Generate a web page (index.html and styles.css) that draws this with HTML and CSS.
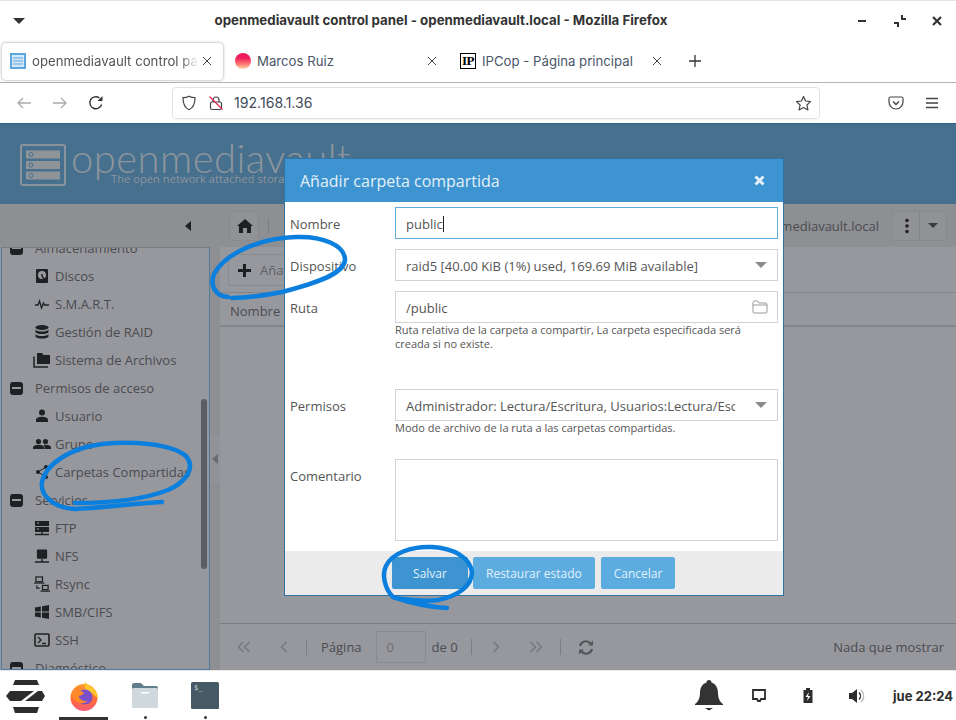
FILE: index.html
```html
<!DOCTYPE html>
<html lang="es">
<head>
<meta charset="utf-8">
<title>openmediavault control panel</title>
<link rel="stylesheet" href="styles.css">
</head>
<body>
<div class="screen">
  <header class="titlebar">
    <svg class="menu-caret" width="14" height="8" viewBox="0 0 14 8"><path d="M1 1h12L7 7z" fill="#333"/></svg>
    <div class="win-title">openmediavault control panel - openmediavault.local - Mozilla Firefox</div>
    <div class="win-controls">
      <svg width="12" height="12" viewBox="0 0 12 12"><path d="M1 6h8" stroke="#333" stroke-width="2" fill="none"/></svg>
      <svg width="14" height="14" viewBox="0 0 14 14"><path d="M9 1v4h4M1 9h4v4" stroke="#333" stroke-width="2" fill="none"/></svg>
      <svg width="12" height="12" viewBox="0 0 12 12"><path d="M2 2l8 8M10 2l-8 8" stroke="#333" stroke-width="2.2" fill="none"/></svg>
    </div>
  </header>

  <nav class="tabs">
    <div class="tab tab-active">
      <svg class="fav" width="16" height="16" viewBox="0 0 16 16"><rect width="16" height="16" fill="#5ba6dc"/><rect x="2" y="2" width="12" height="12" fill="#d4e8f7"/><path d="M3 5h10M3 8h10M3 11h10" stroke="#5ba6dc" stroke-width="1"/></svg>
      <span class="tab-text tab-fade">openmediavault control pa</span>
      <svg class="tab-x" width="10" height="10" viewBox="0 0 10 10"><path d="M1 1l8 8M9 1L1 9" stroke="#444" stroke-width="1" fill="none"/></svg>
    </div>
    <div class="tab">
      <span class="marcos-ico"></span>
      <span class="tab-text">Marcos Ruiz</span>
      <svg class="tab-x" width="10" height="10" viewBox="0 0 10 10"><path d="M1 1l8 8M9 1L1 9" stroke="#444" stroke-width="1" fill="none"/></svg>
    </div>
    <div class="tab">
      <span class="ip-ico">IP</span>
      <span class="tab-text">IPCop - Página principal</span>
      <svg class="tab-x" width="10" height="10" viewBox="0 0 10 10"><path d="M1 1l8 8M9 1L1 9" stroke="#444" stroke-width="1" fill="none"/></svg>
    </div>
    <svg class="tab-plus" width="14" height="14" viewBox="0 0 14 14"><path d="M7 1v12M1 7h12" stroke="#333" stroke-width="1.3" fill="none"/></svg>
  </nav>

  <div class="navbar">
    <svg class="nav-ico nav-back" width="16" height="16" viewBox="0 0 16 16"><path d="M15 8H2M7 3L2 8l5 5" stroke="#aaa" stroke-width="1.3" fill="none"/></svg>
    <svg class="nav-ico nav-fwd" width="16" height="16" viewBox="0 0 16 16"><path d="M1 8h13M9 3l5 5-5 5" stroke="#aaa" stroke-width="1.3" fill="none"/></svg>
    <svg class="nav-ico nav-reload" width="16" height="16" viewBox="0 0 16 16"><path d="M13.6 9.5A6 6 0 1 1 11.5 3" stroke="#333" stroke-width="1.4" fill="none"/><path d="M14.5 1v5h-5z" fill="#333"/></svg>
    <div class="urlbar">
      <svg width="16" height="16" viewBox="0 0 16 16"><path d="M8 1.2c2 1.2 4 1.5 6 1.5 0 6-1.6 10-6 12-4.400-2-6-6-6-12 2 0 4-.3 6-1.500z" stroke="#444" stroke-width="1.200" fill="none"/></svg>
      <svg class="url-lock" width="16" height="16" viewBox="0 0 16 16"><path d="M5 7V5a3 3 0 0 1 6 0v2" stroke="#444" stroke-width="1.200" fill="none"/><rect x="2.500" y="7" width="11" height="7.500" rx="1.500" stroke="#444" stroke-width="1.200" fill="none"/><path d="M1.500 1.500l13 13" stroke="#e22850" stroke-width="1.300"/></svg>
      <span class="url-text">192.168.1.36</span>
      <svg class="url-star" width="17" height="17" viewBox="0 0 17 17"><path d="M8.500 1.500l2.100 4.500 4.900.6-3.600 3.400 1 4.900-4.400-2.500-4.400 2.500 1-4.900L1.500 6.600l4.900-.6z" stroke="#444" stroke-width="1.200" fill="none" stroke-linejoin="round"/></svg>
    </div>
    <svg class="nav-ico nav-pocket" width="16" height="16" viewBox="0 0 16 16"><path d="M2.500 2h11A1.500 1.500 0 0 1 15 3.500V7a7 7 0 0 1-14 0V3.500A1.500 1.500 0 0 1 2.500 2z" stroke="#444" stroke-width="1.200" fill="none"/><path d="M5 6.500l3 3 3-3" stroke="#444" stroke-width="1.400" fill="none"/></svg>
    <svg class="nav-ico nav-menu" width="14" height="12" viewBox="0 0 14 12"><path d="M1 1.500h12M1 6h12M1 10.500h12" stroke="#444" stroke-width="1.300" fill="none"/></svg>
  </div>

  <main class="app">
    <div class="app-header">
      <svg class="logo-mark" width="46" height="42" viewBox="0 0 46 42">
        <rect x="1" y="1" width="44" height="40" rx="2" fill="none" stroke="#8a939c" stroke-width="2"/>
        <rect x="6" y="6.500" width="34" height="8" fill="#8f9499"/><rect x="6" y="17" width="34" height="8" fill="#8f9499"/><rect x="6" y="27.500" width="34" height="8" fill="#8f9499"/>
        <circle cx="11" cy="10.500" r="2" fill="none" stroke="#47708f"/><circle cx="11" cy="21" r="2" fill="none" stroke="#47708f"/><circle cx="11" cy="31.500" r="2" fill="none" stroke="#47708f"/>
      </svg>
      <div class="logo-text">
        <div class="logo-name">openmediavault</div>
        <div class="logo-sub">The open network attached storage</div>
      </div>
    </div>
    <div class="app-toolbar">
      <div class="collapse-slot"><span class="caret-left"></span></div>
      <div class="tool-btn home-btn">
        <svg width="16" height="14" viewBox="0 0 16 14"><path d="M8 0L0 7h2v7h4V9h4v5h4V7h2z" fill="#1e1f22"/></svg>
      </div>
      <span class="tool-sep"></span>
      <div class="tool-spacer"></div>
      <span class="host-name">openmediavault.local</span>
      <div class="split-btn">
        <span class="split-part split-first"><svg width="4" height="16" viewBox="0 0 4 16"><circle cx="2" cy="2.500" r="1.800" fill="#222"/><circle cx="2" cy="8" r="1.800" fill="#222"/><circle cx="2" cy="13.500" r="1.800" fill="#222"/></svg></span>
        <span class="split-part split-last"><span class="caret-down"></span></span>
      </div>
    </div>
    <div class="app-body">
      <aside class="sidebar">
        <ul class="tree">
          <li class="group"><span class="minus"></span>Almacenamiento</li>
          <li class="leaf"><svg viewBox="0 0 14 16"><rect width="12" height="14" x="1" y="1" rx="1" fill="#1f2023"/><circle cx="7" cy="7" r="4" fill="#9a9a9e"/><circle cx="7" cy="7" r="1" fill="#1f2023"/><path d="M7 8l2.500 3.500" stroke="#1f2023" stroke-width="1.400"/></svg>Discos</li>
          <li class="leaf"><svg viewBox="0 0 14 16"><path d="M0 9h3l1.500-4 2 7 2-5 1 2h4.500" stroke="#1f2023" stroke-width="1.300" fill="none"/></svg>S.M.A.R.T.</li>
          <li class="leaf"><svg viewBox="0 0 14 16"><ellipse cx="7" cy="3.500" rx="6.500" ry="2.500" fill="#1f2023"/><path d="M.5 5.500c1 2.700 12 2.700 13 0v2.500c-1 2.700-12 2.700-13 0zM.5 10c1 2.700 12 2.700 13 0v2.500c-1 2.700-12 2.700-13 0z" fill="#1f2023"/></svg>Gestión de RAID</li>
          <li class="leaf"><svg class="wide" viewBox="0 0 18 16"><path d="M4 1h5l1.500 2H17v9H4z" fill="#1f2023"/><path d="M1 4.500V15h14" stroke="#1f2023" stroke-width="1.500" fill="none"/></svg>Sistema de Archivos</li>
          <li class="group"><span class="minus"></span>Permisos de acceso</li>
          <li class="leaf"><svg viewBox="0 0 14 16"><circle cx="7" cy="4.500" r="3" fill="#1f2023"/><path d="M1 14v-2c0-2 3-3.200 6-3.200s6 1.200 6 3.200v2z" fill="#1f2023"/></svg>Usuario</li>
          <li class="leaf"><svg class="wide" viewBox="0 0 18 16"><circle cx="5.500" cy="5.500" r="2.600" fill="#1f2023"/><circle cx="12.500" cy="5.500" r="2.600" fill="#1f2023"/><path d="M0 13v-1.500c0-1.800 2.500-2.700 5.500-2.700s5.500.9 5.500 2.700V13zM11.500 13v-2c0-.8-.5-1.500-1-2 .6-.2 1.300-.2 2-.2 3 0 5.500.9 5.500 2.700V13z" fill="#1f2023"/></svg>Grupo</li>
          <li class="leaf"><svg viewBox="0 0 14 16"><circle cx="11" cy="3" r="2" fill="#1f2023"/><circle cx="3" cy="8" r="2" fill="#1f2023"/><circle cx="11" cy="13" r="2" fill="#1f2023"/><path d="M11 3L3 8l8 5" stroke="#1f2023" fill="none"/></svg>Carpetas Compartidas</li>
          <li class="group"><span class="minus"></span>Servicios</li>
          <li class="leaf"><svg viewBox="0 0 14 16"><rect y="1" width="14" height="5" fill="#1f2023"/><rect y="7" width="14" height="5" fill="#1f2023"/><path d="M2 3h2M2 9h2" stroke="#9a9a9e"/><path d="M7 12v2M0 14.500h14" stroke="#1f2023" stroke-width="1.400"/></svg>FTP</li>
          <li class="leaf"><svg viewBox="0 0 15 16"><rect x="2" y="1" width="11" height="10" rx="1" fill="#1f2023"/><path d="M7.500 11v3M0 14.500h15" stroke="#1f2023" stroke-width="1.500"/></svg>NFS</li>
          <li class="leaf"><svg class="wide" viewBox="0 0 17 17"><rect x="2" y="1" width="7" height="5" fill="none" stroke="#1f2023" stroke-width="1.300"/><path d="M0 7.500h11" stroke="#1f2023" stroke-width="1.300"/><rect x="9" y="10" width="6" height="4.500" fill="none" stroke="#1f2023" stroke-width="1.300"/><path d="M7 16h10M3 10v3h3" stroke="#1f2023" stroke-width="1.300" fill="none"/></svg>Rsync</li>
          <li class="leaf"><svg viewBox="0 0 14 16"><path d="M0 3.500l5.800-1v5H0zM7 2.300L14 1v6.500H7zM0 8.500h5.800v5L0 12.500zM7 8.500h7V15l-7-1.300z" fill="#1f2023"/></svg>SMB/CIFS</li>
          <li class="leaf"><svg class="wide" viewBox="0 0 16 16"><rect x="1" y="2" width="14" height="12" rx="1" fill="none" stroke="#1f2023" stroke-width="1.600"/><path d="M4 5l3 3-3 3M8 11.500h4" stroke="#1f2023" stroke-width="1.400" fill="none"/></svg>SSH</li>
          <li class="group"><span class="minus"></span>Diagnóstico</li>
        </ul>
        <span class="scroll-thumb"></span>
      </aside>
      <div class="split-strip"><span class="strip-handle"><span class="caret-left small"></span></span></div>
      <section class="grid-panel">
        <div class="grid-tools"><div class="add-btn"><svg width="13" height="13" viewBox="0 0 13 13"><path d="M6.500 0v13M0 6.500h13" stroke="#1e1f22" stroke-width="3"/></svg><span>Añadir</span></div></div>
        <div class="grid-head">Nombre</div>
        <div class="grid-empty"></div>
        <div class="pager">
          <svg class="pg-first" width="14" height="12" viewBox="0 0 14 12"><path d="M6.500 1l-5 5 5 5M12.500 1l-5 5 5 5" stroke="#77787c" stroke-width="1.500" fill="none"/></svg>
          <svg class="pg-prev" width="8" height="12" viewBox="0 0 8 12"><path d="M6.500 1l-5 5 5 5" stroke="#77787c" stroke-width="1.500" fill="none"/></svg>
          <span class="pg-sep pg-sep-a"></span>
          <span class="pg-label">Página</span>
          <span class="pg-input">0</span>
          <span class="pg-of">de 0</span>
          <span class="pg-sep pg-sep-b"></span>
          <svg class="pg-next" width="8" height="12" viewBox="0 0 8 12"><path d="M1.500 1l5 5-5 5" stroke="#77787c" stroke-width="1.500" fill="none"/></svg>
          <svg class="pg-last" width="14" height="12" viewBox="0 0 14 12"><path d="M1.500 1l5 5-5 5M7.500 1l5 5-5 5" stroke="#77787c" stroke-width="1.500" fill="none"/></svg>
          <span class="pg-sep pg-sep-c"></span>
          <svg class="pg-refresh" width="16" height="15" viewBox="0 0 16 15"><path d="M2 6a6 6 0 0 1 10.500-2.500M14 9a6 6 0 0 1-10.500 2.500" stroke="#55565a" stroke-width="2.200" fill="none"/><path d="M15 .500v5h-5zM1 14.500v-5h5z" fill="#55565a"/></svg>
          <span class="pg-status">Nada que mostrar</span>
        </div>
      </section>
    </div>

    <div class="modal">
      <div class="modal-head">
        <span>Añadir carpeta compartida</span>
        <svg width="11" height="11" viewBox="0 0 11 11"><path d="M1.500 1.500l8 8M9.500 1.500l-8 8" stroke="#e4f0f9" stroke-width="3"/></svg>
      </div>
      <form class="modal-body">
        <div class="row"><label>Nombre</label><div class="field focus"><span>public</span><i class="cursor"></i></div></div>
        <div class="row"><label>Dispositivo</label><div class="field"><span>raid5 [40.00 KiB (1%) used, 169.69 MiB available]</span><span class="caret-down light"></span></div></div>
        <div class="row row-ruta"><label>Ruta</label><div class="col">
          <div class="field"><span>/public</span><svg class="folder" width="16" height="14" viewBox="0 0 16 14"><path d="M1 12V2.500A1.500 1.500 0 0 1 2.500 1h3L7 3h6.500A1.500 1.500 0 0 1 15 4.500V12a1 1 0 0 1-1 1H2a1 1 0 0 1-1-1zM1 5h14" stroke="#999" fill="none"/></svg></div>
          <p class="help">Ruta relativa de la carpeta a compartir, La carpeta especificada será creada si no existe.</p>
        </div></div>
        <div class="row row-perm"><label>Permisos</label><div class="col">
          <div class="field"><span class="clip">Administrador: Lectura/Escritura, Usuarios:Lectura/Escritura, Otros: Sólo lectura</span><span class="caret-down light"></span></div>
          <p class="help">Modo de archivo de la ruta a las carpetas compartidas.</p>
        </div></div>
        <div class="row"><label>Comentario</label><div class="area"></div></div>
      </form>
      <div class="modal-foot">
        <span class="btn btn-primary">Salvar</span>
        <span class="btn">Restaurar estado</span>
        <span class="btn">Cancelar</span>
      </div>
    </div>
  </main>

  <footer class="dock">
    <svg class="zorin" width="40" height="34" viewBox="0 0 40 34">
      <path d="M9 1H31L33 6H7Z" fill="#2d2d2d"/>
      <path d="M4 12H28L15 22H4L0 17Z" fill="#2d2d2d"/>
      <path d="M32 12H36L39 17L36 22H19Z" fill="#2d2d2d"/>
      <path d="M7 28H33L31 34H9Z" fill="#2d2d2d"/>
    </svg>
    <div class="dock-app dock-active">
      <svg width="30" height="30" viewBox="0 0 30 30">
        <defs><linearGradient id="ffg" x1="0" y1="0" x2="0" y2="1"><stop offset="0" stop-color="#ff9a2b"/><stop offset=".6" stop-color="#ff6a3c"/><stop offset="1" stop-color="#f55a78"/></linearGradient></defs>
        <circle cx="15" cy="16.500" r="13.500" fill="url(#ffg)"/>
        <path d="M16 0c0 3 5 4 8 7 4 4 5 7 5 11-3-4-7-7-11-7-2-3-3-6-2-11z" fill="#ffc62e"/>
        <circle cx="16" cy="16" r="7.500" fill="#7a4fc8"/>
        <path d="M3 11c2-3 6-5 9-4-2 1-3 2-3 3 3 0 6 1 6 2-1 2-3 2-5 3 0 3 4 6 9 5-5 4-12 2-14-2-2-2-3-5-2-7z" fill="#ff8a2b"/>
      </svg>
    </div>
    <div class="dock-app dock-dot">
      <svg width="28" height="27" viewBox="0 0 28 27"><path d="M1 3a2 2 0 0 1 2-2h7l3 3h12a2 2 0 0 1 2 2v4H1z" fill="#5f7d8a"/><rect x="1" y="6" width="26" height="20" rx="1.500" fill="#cfd8dc"/><rect x="10" y="10" width="8" height="1.500" fill="#fff"/></svg>
    </div>
    <div class="dock-app dock-dot">
      <svg width="28" height="27" viewBox="0 0 28 27"><rect width="28" height="27" rx="1.500" fill="#455a64"/><text x="3" y="8" class="term-text">$_</text></svg>
    </div>
    <div class="tray">
      <svg width="28" height="31" viewBox="0 0 28 31"><path d="M14 0a2.500 2.500 0 0 1 2.500 2.500C21 4 23 8 23 13c0 5 2 9 5 11v1H0v-1c3-2 5-6 5-11 0-5 2-9 6.500-10.500A2.500 2.500 0 0 1 14 0z" fill="#333"/><path d="M10 28h8l-4 2.500z" fill="#333"/></svg>
      <svg class="tray-mon" width="14" height="13" viewBox="0 0 14 13"><path d="M1 1h12v9H9l-1 2H6l-1-2H1z" stroke="#2d2d2d" stroke-width="1.800" fill="none"/></svg>
      <svg class="tray-bat" width="10" height="15" viewBox="0 0 10 15"><path d="M3 0h4v2h2.500v13H.5V2H3z" fill="#2d2d2d"/><path d="M6 4L2.500 9H5l-1 4 3.500-5H5z" fill="#fff"/></svg>
      <svg class="tray-vol" width="16" height="14" viewBox="0 0 16 14"><path d="M0 4h3l5-4v14l-5-4H0z" fill="#2d2d2d"/><path d="M10 3.500a5 5 0 0 1 0 7" stroke="#2d2d2d" stroke-width="1.400" fill="none"/><path d="M12 1a8 8 0 0 1 0 12" stroke="#bbb" stroke-width="1.400" fill="none"/></svg>
      <span class="clock">jue 22:24</span>
    </div>
  </footer>

  <svg class="ink" width="956" height="720" viewBox="0 0 956 720">
    <path d="M228 297C214 296 210 284 214 274C226 252 262 238 296 237C322 236 345 245 345 260C344 275 310 285 282 292C262 296 246 298 232 298"/>
    <path d="M162 502C130 504 100 508 75 509C52 508 40 494 42 482C46 464 70 448 102 444C130 441 170 443 186 456C196 468 186 482 168 490C140 501 105 503 75 503"/>
    <path d="M447 608C425 607 408 602 393 597C384 588 382 574 386 566C392 553 412 546 432 547C454 548 470 558 472 572C472 586 458 596 438 600C425 602 410 600 395 598"/>
  </svg>
</div>
</body>
</html>
```

FILE: styles.css
```css
* { box-sizing: border-box; }
html, body { margin: 0; padding: 0; }
body { width: 956px; height: 720px; overflow: hidden; background: #fff; font-family: "Open Sans", "Noto Sans", sans-serif; color: #4a4b50; }
svg { display: block; flex: none; }
.screen { position: relative; width: 956px; height: 720px; display: flex; flex-direction: column; }

.titlebar { height: 40px; border-top: 1px solid #e4e4e4; display: flex; align-items: center; position: relative; padding-left: 12px; }
.win-title { position: absolute; left: 0; right: 74px; top: 11px; text-align: center; font: 700 13.3px/16px Inter, sans-serif; color: #333; }
.win-controls { margin-left: auto; display: flex; align-items: center; gap: 24px; padding-right: 13px; position: relative; }

.tabs { height: 43px; border-bottom: 1px solid #b4b4b4; display: flex; align-items: center; padding-left: 2px; font: 400 13.2px/16px Inter, sans-serif; }
.tab { width: 225px; height: 37px; display: flex; align-items: center; padding: 0 14px 0 8px; color: #4a5668; }
.tab-active { width: 221px; margin-right: 4px; padding-right: 10px; background: #fff; border-radius: 4px; box-shadow: 0 0 3px rgba(0,0,0,.4); color: #555; }
.tab-text { margin-left: 6px; flex: 1; white-space: nowrap; overflow: hidden; }
.tab-fade { -webkit-mask-image: linear-gradient(90deg, #000 90%, transparent); mask-image: linear-gradient(90deg, #000 90%, transparent); margin-right: 4px; }
.tab-x { margin-right: 1px; }
.marcos-ico { width: 16px; height: 16px; border-radius: 50%; background: linear-gradient(#ef1b5d 30%, #ff7a70 70%, #ffd9b0); flex: none; }
.ip-ico { width: 16px; height: 16px; border: 1px solid #000; font: 700 13px/13px "Liberation Serif", serif; color: #000; letter-spacing: -.5px; text-align: center; flex: none; box-shadow: inset 0 0 0 1px #fff; overflow: hidden; }
.tab-plus { margin-left: 11px; }

.navbar { height: 41px; display: flex; align-items: center; padding-left: 16px; border-bottom: 1px solid #2f6288; }
.nav-fwd { margin-left: 20px; }
.nav-reload { margin-left: 20px; }
.urlbar { width: 648px; height: 32px; margin-left: 68px; border: 1px solid #e2e2e2; border-radius: 4px; display: flex; align-items: center; padding: 0 7px 0 8px; box-shadow: 0 1px 1px rgba(0,0,0,.04); }
.url-lock { margin-left: 11px; }
.url-text { margin-left: 10px; font: 400 14.1px/16px Inter, sans-serif; color: #414b5c; }
.url-star { margin-left: auto; }
.nav-pocket { margin-left: 68px; }
.nav-menu { margin-left: 21px; }

.app { flex: 1; position: relative; display: flex; flex-direction: column; background: #97989d; min-height: 0; }
.app-header { height: 80px; background: #47708f; display: flex; padding: 20px 0 0 20px; }
.logo-text { margin: -6px 0 0 5px; position: relative; }
.logo-name { font: 300 40px/40px Lato, sans-serif; color: #8c959d; letter-spacing: .45px; }
.logo-sub { font-size: 11px; line-height: 13px; color: #8c959d; margin: -6px 0 0 40px; letter-spacing: .1px; white-space: nowrap; }

.app-toolbar { height: 43px; background: #8e8f93; display: flex; align-items: center; padding-right: 9px; }
.collapse-slot { width: 229px; display: flex; justify-content: flex-end; padding-right: 38px; }
.caret-left { display: block; width: 0; height: 0; border: 5px solid transparent; border-left-width: 0; border-right: 6px solid #1f2023; }
.caret-left.small { border-right-color: #6a6b70; }
.tool-btn { width: 30px; height: 30px; background: #919296; border: 1px solid #898a8e; border-radius: 2px; display: flex; align-items: center; justify-content: center; padding-left: 2px; }
.tool-sep { width: 1px; height: 16px; background: #7d7e82; margin-left: 9px; }
.tool-spacer { flex: 1; }
.host-name { font-size: 13px; color: #4a4b50; margin-right: 13px; }
.split-btn { display: flex; height: 30px; background: #919296; border: 1px solid #898a8e; border-radius: 2px; }
.split-part { width: 26px; display: flex; align-items: center; justify-content: center; }
.split-first { width: 27px; padding-left: 2px; border-right: 1px solid #838488; }
.caret-down { display: block; width: 0; height: 0; border: 5px solid transparent; border-bottom-width: 0; border-top: 5px solid #3a3b3f; }
.caret-down.light { border-left-width: 6px; border-right-width: 6px; border-top: 6px solid #8a8a8a; margin: -2px 0 0; }

.app-body { flex: 1; display: flex; min-height: 0; }
.sidebar { position: relative; overflow: hidden; margin-left: 1px; flex: none; width: 209px; border: 1px solid #4f7a9b; border-top-color: #7c7d82; background: #97989d; }
.tree { list-style: none; margin: -14px 0 0; padding: 0; }
.tree li { height: 28px; display: flex; align-items: center; font-size: 13px; color: #4a4b50; white-space: nowrap; }
.group { padding-left: 8px; }
.leaf { padding-left: 33px; position: relative; }
.leaf svg { width: 14px; height: 16px; margin-right: 6px; }
.leaf svg.wide { width: 18px; height: 16px; margin-left: -2px; margin-right: 4px; }
.minus { width: 13px; height: 13px; background: #1f2023; border-radius: 3px; margin-right: 12px; position: relative; flex: none; }
.minus::after { content: ""; position: absolute; left: 2px; right: 2px; top: 5px; height: 2px; background: #97989d; }
.scroll-thumb { position: absolute; right: 2px; top: 151px; width: 6px; height: 170px; background: #5d5e63; border-radius: 3px; }

.split-strip { width: 10px; background: #8e8f93; display: flex; align-items: center; flex: none; }
.strip-handle { width: 10px; height: 48px; background: #929398; display: flex; align-items: center; justify-content: center; }
.grid-panel { flex: 1; display: flex; flex-direction: column; min-width: 0; background: #97989d; }
.grid-tools { height: 46px; border-bottom: 1px solid #85868a; padding: 7px 0 0 8px; }
.add-btn { width: 90px; height: 32px; border: 1px solid #8a8b8f; border-radius: 2px; display: flex; align-items: center; padding-left: 9px; font-size: 13px; color: #5f6064; }
.add-btn span { margin-left: 9px; }
.grid-head { height: 34px; border-bottom: 2px solid #85868a; padding: 9px 0 0 10px; font-size: 13px; line-height: 18px; }
.grid-empty { flex: 1; }
.pager { height: 47px; border-top: 1px solid #7d7e82; display: flex; align-items: center; padding: 0 12px 0 17px; font-size: 13px; }
.pg-prev { margin-left: 29px; }
.pg-sep { width: 1px; height: 16px; background: #7d7e82; flex: none; }
.pg-sep-a { margin: 0 14px 0 18px; }
.pg-label { margin-right: 14px; }
.pg-input { width: 50px; height: 32px; border: 1px solid #8a8b8f; color: #6c6d71; display: flex; align-items: center; padding-left: 10px; flex: none; }
.pg-of { margin-left: 6px; }
.pg-sep-b { margin: 0 20px 0 13px; }
.pg-last { margin-left: 29px; }
.pg-sep-c { margin: 0 17px; }
.pg-status { margin-left: auto; }

.modal { position: absolute; left: 284px; top: 34px; width: 500px; height: 438px; background: #fff; border: 1px solid #2f74a5; display: flex; flex-direction: column; font-size: 13px; color: #555; }
.modal-head { height: 43px; background: #3d94d0; color: #e4f0f9; font-size: 16px; display: flex; align-items: center; justify-content: space-between; padding: 0 18px 0 15px; flex: none; }
.modal-body { flex: 1; padding: 5px 5px 0; display: flex; flex-direction: column; gap: 10px; }
.row { display: flex; }
.row label { width: 105px; height: 32px; flex: none; line-height: 34px; }
.row-ruta { height: 88px; }
.row-perm { height: 60px; }
.col { flex: 1; min-width: 0; }
.field { height: 32px; border: 1px solid #d2d2d2; padding: 2px 9px 0 10px; display: flex; align-items: center; justify-content: space-between; flex: 1; font-size: 13px; color: #555; min-width: 0; }
.field .caret-down { margin-right: 1px; }
.folder { margin-top: -2px; }
.field.focus { border-color: #5fadd9; justify-content: flex-start; }
.cursor { width: 1px; height: 16px; background: #222; }
.clip { width: 329px; overflow: hidden; white-space: nowrap; }
.help { margin: 0; font-size: 11px; line-height: 14px; color: #555; }
.area { flex: 1; height: 82px; border: 1px solid #d2d2d2; }
.modal-foot { height: 44px; background: #ebebeb; display: flex; align-items: center; padding: 0 0 0 107px; gap: 6px; flex: none; }
.btn { height: 32px; padding: 0 13px; background: #5dace0; color: #e3f0fa; border-radius: 2px; font-size: 12px; display: flex; align-items: center; }
.btn-primary { background: #3d94d0; width: 76px; justify-content: center; margin-right: -1px; }

.dock { height: 50px; background: #fff; display: flex; align-items: center; border-top: 1px solid #e8e8e8; padding-left: 6px; position: relative; }
.dock-app { height: 49px; display: flex; align-items: center; justify-content: center; position: relative; }
.dock-active { margin: 0 7px 0 13px; width: 49px; }
.dock-active::after { content: ""; position: absolute; left: 0; right: 0; bottom: 0; height: 3px; background: #333; }
.dock-dot { width: 60px; }
.dock-dot::after { content: ""; position: absolute; left: 50%; bottom: 1px; width: 3px; height: 3px; margin-left: -1px; border-radius: 50%; background: #333; }
.term-text { font: 400 7px "DejaVu Sans Mono", monospace; fill: #cfd8dc; }
.tray { margin-left: auto; display: flex; align-items: center; padding-right: 3px; }
.tray-mon { margin-left: 29px; }
.tray-bat { margin-left: 37px; }
.tray-vol { margin-left: 36px; }
.clock { margin-left: 28px; font: 700 13px/16px Inter, sans-serif; color: #2d2d2d; }

.ink { position: absolute; left: 0; top: 0; pointer-events: none; }
.ink path { fill: none; stroke: #0b7fdd; stroke-width: 4.5; stroke-linecap: round; stroke-linejoin: round; }
```
